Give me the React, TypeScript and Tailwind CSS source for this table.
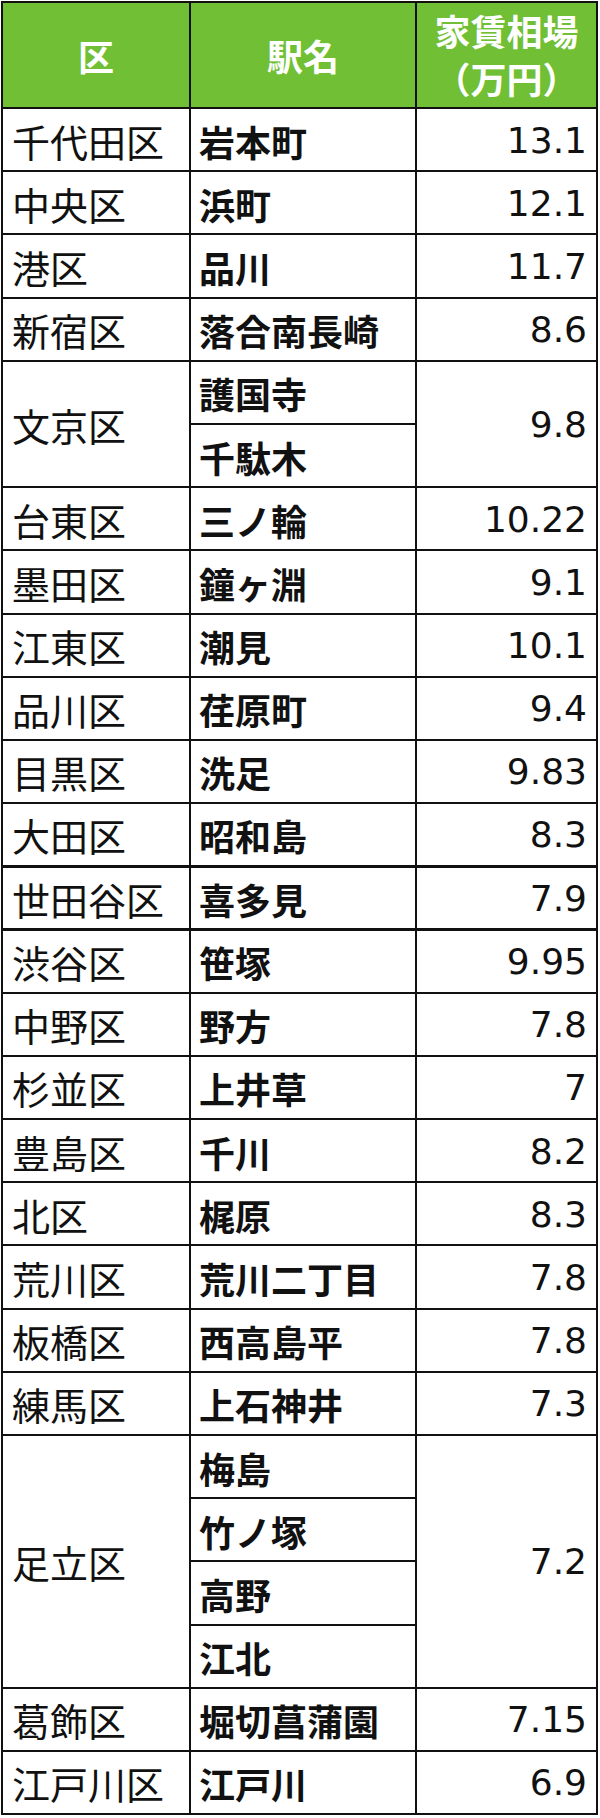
type Row = {
  ward: string;
  stations: string[];
  rent: string;
  thickTop?: boolean;
};

const rows: Row[] = [
  { ward: '千代田区', stations: ['岩本町'], rent: '13.1' },
  { ward: '中央区', stations: ['浜町'], rent: '12.1' },
  { ward: '港区', stations: ['品川'], rent: '11.7' },
  { ward: '新宿区', stations: ['落合南長崎'], rent: '8.6' },
  { ward: '文京区', stations: ['護国寺', '千駄木'], rent: '9.8' },
  { ward: '台東区', stations: ['三ノ輪'], rent: '10.22' },
  { ward: '墨田区', stations: ['鐘ヶ淵'], rent: '9.1' },
  { ward: '江東区', stations: ['潮見'], rent: '10.1' },
  { ward: '品川区', stations: ['荏原町'], rent: '9.4' },
  { ward: '目黒区', stations: ['洗足'], rent: '9.83' },
  { ward: '大田区', stations: ['昭和島'], rent: '8.3' },
  { ward: '世田谷区', stations: ['喜多見'], rent: '7.9', thickTop: true },
  { ward: '渋谷区', stations: ['笹塚'], rent: '9.95', thickTop: true },
  { ward: '中野区', stations: ['野方'], rent: '7.8' },
  { ward: '杉並区', stations: ['上井草'], rent: '7' },
  { ward: '豊島区', stations: ['千川'], rent: '8.2' },
  { ward: '北区', stations: ['梶原'], rent: '8.3' },
  { ward: '荒川区', stations: ['荒川二丁目'], rent: '7.8' },
  { ward: '板橋区', stations: ['西高島平'], rent: '7.8' },
  { ward: '練馬区', stations: ['上石神井'], rent: '7.3' },
  { ward: '足立区', stations: ['梅島', '竹ノ塚', '高野', '江北'], rent: '7.2' },
  { ward: '葛飾区', stations: ['堀切菖蒲園'], rent: '7.15' },
  { ward: '江戸川区', stations: ['江戸川'], rent: '6.9' },
];

const cjk = "font-['Noto_Sans_CJK_JP',sans-serif]";
const num = "font-['DejaVu_Sans','Noto_Sans_CJK_JP',sans-serif]";

export default function App() {
  return (
    <div className="w-[600px] h-[1818px] bg-white pt-[1px] pl-[1px]">
      <table className={`border-collapse w-[595px] table-fixed text-[#111] ${cjk}`}>
        <colgroup>
          <col className="w-[188px]" />
          <col className="w-[226px]" />
          <col className="w-[181px]" />
        </colgroup>
        <thead>
          <tr className="h-[106px] bg-[#70bf34] text-white font-bold text-[36px]">
            <th className="border-2 border-[#111] text-center">区</th>
            <th className="border-2 border-[#111] text-center">駅名</th>
            <th className="border-2 border-[#111] text-center leading-[48px] pb-[2px]">
              家賃相場
              <br />
              （万円）
            </th>
          </tr>
        </thead>
        <tbody>
          {rows.map((r) =>
            r.stations.map((s, i) => (
              <tr key={r.ward + s} className="h-[63.2px]">
                {i === 0 && (
                  <td
                    rowSpan={r.stations.length}
                    className={`border-2 border-[#111] pl-[9px] pt-[2px] text-[38px] leading-none align-middle ${r.thickTop ? 'border-t-[3px]' : ''}`}
                  >
                    {r.ward}
                  </td>
                )}
                <td
                  className={`border-2 border-[#111] pl-[8px] pt-[2px] text-[36px] font-bold leading-none align-middle ${r.thickTop && i === 0 ? 'border-t-[3px]' : ''}`}
                >
                  {s}
                </td>
                {i === 0 && (
                  <td
                    rowSpan={r.stations.length}
                    className={`border-2 border-[#111] pr-[9px] pt-[2px] text-right text-[36px] leading-none align-middle ${num} ${r.thickTop ? 'border-t-[3px]' : ''}`}
                  >
                    {r.rent}
                  </td>
                )}
              </tr>
            ))
          )}
        </tbody>
      </table>
    </div>
  );
}
